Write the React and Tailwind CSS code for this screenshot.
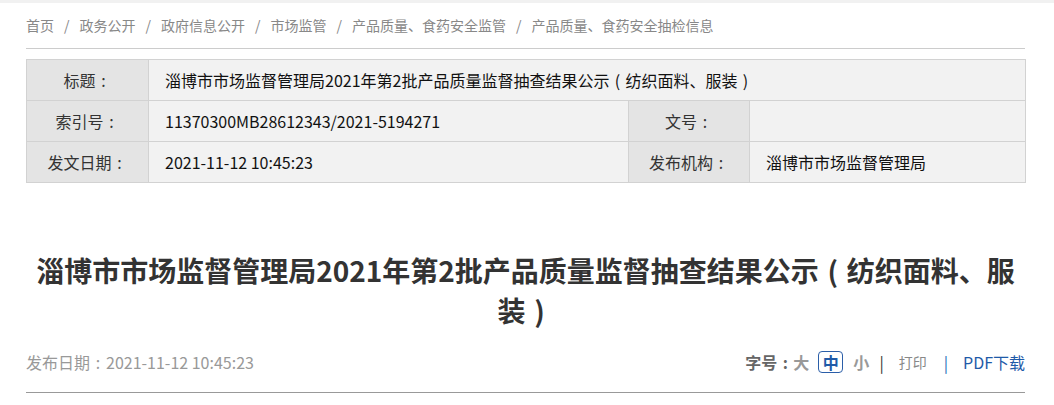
import React from "react";

const font = { fontFamily: '"Microsoft YaHei", "Noto Sans CJK SC", "Noto Sans", sans-serif' };

const crumbs = ["首页", "政务公开", "政府信息公开", "市场监管", "产品质量、食药安全监管", "产品质量、食药安全抽检信息"];

const C = () => <span className="inline-block w-[1em] text-center">:</span>;
const L = () => <span className="inline-block w-[1em] text-center">(</span>;
const R = () => <span className="inline-block w-[1em] text-center">)</span>;

export default function App() {
  return (
    <div className="w-[1054px] h-[405px] bg-white overflow-hidden" style={font}>
      <div className="h-[3px] bg-[#f1f1f1]" />
      <div className="ml-[26px] w-[999px]">
        <div className="pt-[11px] pb-[12px] border-b border-[#cccccc] flex items-center text-[14px] leading-[22px] text-[#888888]">
          {crumbs.map((c, i) => (
            <React.Fragment key={i}>
              {i > 0 && <span className="px-[10px]">/</span>}
              <span>{c}</span>
            </React.Fragment>
          ))}
        </div>

        <table className="mt-[10px] w-[999px] border-collapse table-fixed text-[16px] leading-[22px]">
          <colgroup>
            <col className="w-[122px]" />
            <col className="w-[480px]" />
            <col className="w-[121px]" />
            <col className="w-[276px]" />
          </colgroup>
          <tbody>
            <tr className="h-[41px]">
              <td className="border border-[#d2d2d2] bg-[#e4e4e4] text-center text-[#333333]">标题<C /></td>
              <td colSpan={3} className="border border-[#d2d2d2] bg-[#f2f2f2] pl-[16px] text-[#111111]">
                淄博市市场监督管理局2021年第2批产品质量监督抽查结果公示<L />纺织面料、服装<R />
              </td>
            </tr>
            <tr className="h-[41px]">
              <td className="border border-[#d2d2d2] bg-[#e4e4e4] text-center text-[#333333]">索引号<C /></td>
              <td className="border border-[#d2d2d2] bg-[#f2f2f2] pl-[16px] text-[#111111]">11370300MB28612343/2021-5194271</td>
              <td className="border border-[#d2d2d2] bg-[#e4e4e4] text-center text-[#333333]">文号<C /></td>
              <td className="border border-[#d2d2d2] bg-[#f2f2f2] pl-[16px] text-[#111111]"></td>
            </tr>
            <tr className="h-[41px]">
              <td className="border border-[#d2d2d2] bg-[#e4e4e4] text-center text-[#333333]">发文日期<C /></td>
              <td className="border border-[#d2d2d2] bg-[#f2f2f2] pl-[16px] text-[#111111]">2021-11-12 10:45:23</td>
              <td className="border border-[#d2d2d2] bg-[#e4e4e4] text-center text-[#333333]">发布机构<C /></td>
              <td className="border border-[#d2d2d2] bg-[#f2f2f2] pl-[16px] text-[#111111]">淄博市市场监督管理局</td>
            </tr>
          </tbody>
        </table>

        <h1 className="mt-[67px] text-center text-[28px] leading-[40px] font-bold text-[#333333]">
          淄博市市场监督管理局2021年第2批产品质量监督抽查结果公示<L />纺织面料、服装<R />
        </h1>

        <div className="mt-[21px] pb-[19px] border-b border-[#999999] flex items-center justify-between leading-[22px]">
          <span className="text-[16px] text-[#999999]">发布日期<C />2021-11-12 10:45:23</span>
          <div className="flex items-center">
            <span className="text-[16px] font-bold text-[#666666]">字号<C /></span>
            <span className="text-[16px] font-bold text-[#999999]">大</span>
            <span className="ml-[9px] h-[22px] w-[25px] flex items-center justify-center rounded-[4px] border border-[#2b5ea8] text-[16px] font-bold text-[#1f5aa8]">中</span>
            <span className="ml-[10px] text-[16px] font-bold text-[#999999]">小</span>
            <span className="ml-[10px] text-[16px] text-[#333333]">|</span>
            <span className="ml-[15px] text-[14px] text-[#888888]">打印</span>
            <span className="ml-[17px] text-[16px] text-[#1f6fb8]">|</span>
            <span className="ml-[15px] text-[16px] text-[#1f5aa8]">PDF下载</span>
          </div>
        </div>
      </div>
    </div>
  );
}
